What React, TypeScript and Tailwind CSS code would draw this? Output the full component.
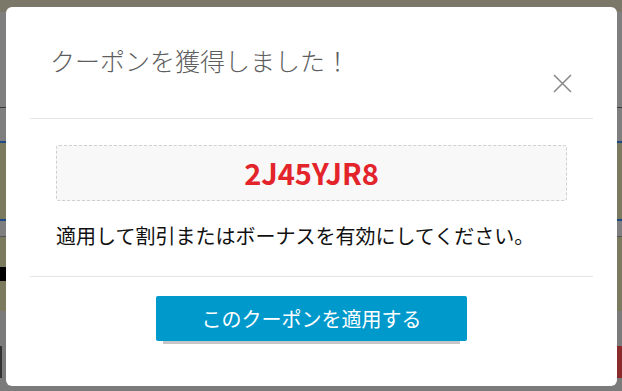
import React from "react";

const jp = { fontFamily: '"Noto Sans CJK JP", "Noto Sans", sans-serif' };

export default function App() {
  return (
    <div className="relative w-[622px] h-[391px] overflow-hidden bg-[#7f7f7f]" style={jp}>
      {/* page behind the overlay */}
      <div className="flex flex-col">
        <div className="h-[12px] bg-[#7b786a]" />
        <div className="h-[95px] bg-[#7f7f7f]" />
        <div className="h-[1px] bg-[#3a3a3a]" />
        <div className="h-[33px] bg-[#7f7f7f]" />
        <div className="h-[2px] bg-[#1d4a86]" />
        <div className="h-[76px] bg-[#7c7a5e]" />
        <div className="h-[2px] bg-[#1d4a86]" />
        <div className="h-[15px] bg-[#7f7f7f]" />
        <div className="h-[1px] bg-[#555]" />
        <div className="h-[74px] bg-[#7c7a5e] flex items-center">
          <div className="w-[6px] h-[14px] bg-black" />
        </div>
        <div className="h-[80px] bg-[#7b7b7b] flex justify-between items-start pt-[35px]">
          <div className="w-[3px] h-[32px] border-l-2 border-[#333]" />
          <div className="w-[6px] h-[32px] bg-[#8a2a2a]" />
        </div>
      </div>

      {/* modal */}
      <div className="absolute left-[6px] top-[7px] w-[611px] h-[379px] bg-white rounded-[6px] px-[24px] flex flex-col">
        <div className="h-[112px] border-b border-[#e6e6e6] flex justify-between items-start pl-[20px] pr-[21px]">
          <div className="mt-[38px] text-[25px] leading-[30px] font-light text-[#5e5e5e]">クーポンを獲得しました！</div>
          <svg className="mt-[67px]" width="19" height="19" viewBox="0 0 19 19">
            <path d="M1 1 L18 18 M18 1 L1 18" stroke="#8a8a8a" strokeWidth="1.6" fill="none" />
          </svg>
        </div>
        <div className="pt-[26px] pb-[25px] px-[26px] border-b border-[#e6e6e6] flex flex-col">
          <div className="h-[56px] bg-[#f8f8f8] border border-dashed border-[#cfcfcf] rounded-[3px] flex items-center justify-center pb-[2px]">
            <span className="text-[29px] font-bold text-[#e3242b] leading-none">2J45YJR8</span>
          </div>
          <div className="mt-[20px] text-[20px] leading-[30px] text-[#111]">適用して割引またはボーナスを有効にしてください。</div>
        </div>
        <div className="pt-[19px] flex justify-center">
          <button className="w-[311px] h-[45px] bg-[#0099cc] rounded-[2px] text-white text-[20px] leading-none shadow-[0_10px_0_-7px_#c6c6c6]">
            このクーポンを適用する
          </button>
        </div>
      </div>
    </div>
  );
}
